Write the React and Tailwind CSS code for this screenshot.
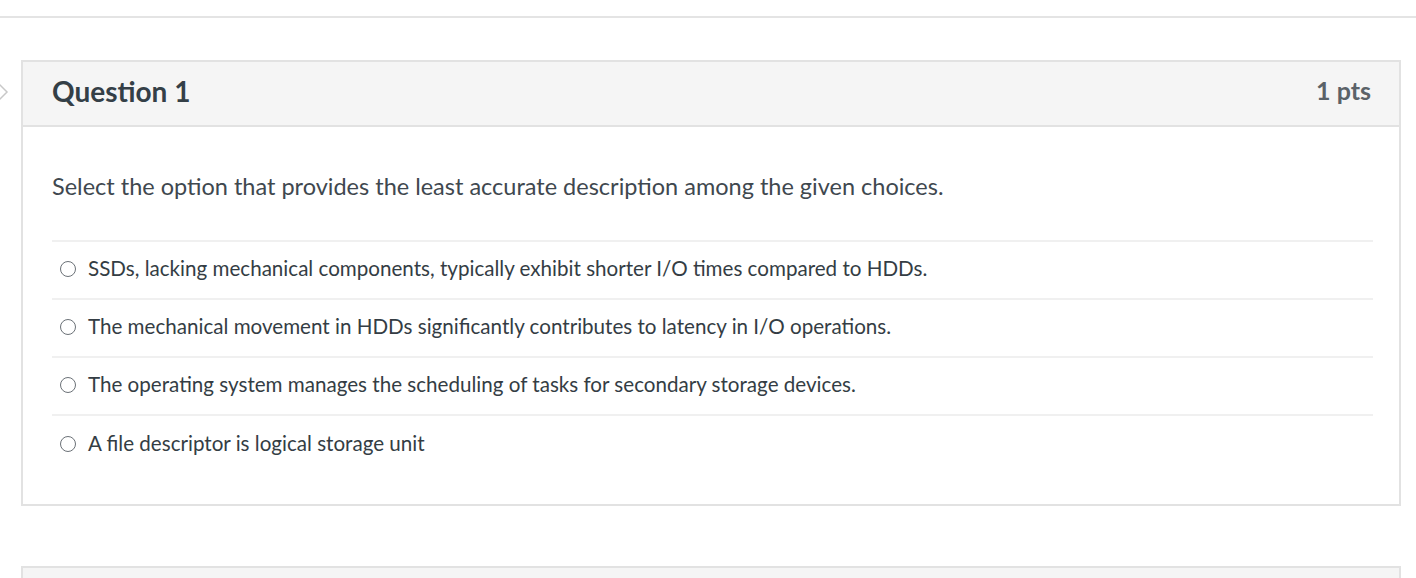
import React from 'react';

const options = [
  'SSDs, lacking mechanical components, typically exhibit shorter I/O times compared to HDDs.',
  'The mechanical movement in HDDs significantly contributes to latency in I/O operations.',
  'The operating system manages the scheduling of tasks for secondary storage devices.',
  'A file descriptor is logical storage unit',
];

const App = () => {
  return (
    <div className="relative min-h-[578px] bg-white overflow-hidden" style={{ fontFamily: 'Lato, "Open Sans", sans-serif' }}>
      <div className="h-[18px] border-b-2 border-[#e4e4e4]" />

      {/* peeking nav chevron */}
      <svg className="absolute left-0 top-[82px]" width="10" height="20" viewBox="0 0 10 20">
        <path d="M-2 1 L7 10 L-2 19" fill="none" stroke="#c8c8c8" strokeWidth="1.5" />
      </svg>

      <div className="ml-[21px] mr-[15px] mt-[42px] border-2 border-[#e2e2e2]">
        <div className="flex items-center justify-between h-[65px] bg-[#f5f5f5] border-b-2 border-[#e2e2e2] pl-[29px] pr-[28px] pb-[5px]">
          <h2 className="text-[28px] font-bold text-[#343f47]">Question 1</h2>
          <span className="text-[25px] font-bold text-[#5b6268]">1 pts</span>
        </div>

        <div className="pl-[29px] pr-[26px] pt-[43px] pb-[30px]">
          <p className="text-[23.5px] text-[#40484f] leading-[32px]">
            Select the option that provides the least accurate description among the given choices.
          </p>

          <div className="mt-[38px] border-t-2 border-[#f0f0f0]">
            {options.map((opt, i) => (
              <div
                key={i}
                className={`flex items-center h-[58px] pl-[8px] pb-[3px] gap-[12px] ${i < options.length - 1 ? 'border-b-2 border-[#f0f0f0]' : ''}`}
              >
                <span className="w-[16px] h-[16px] rounded-full border-[1.5px] border-[#6b7177] bg-white shrink-0" />
                <span className="text-[20.6px] text-[#343d44]">{opt}</span>
              </div>
            ))}
          </div>
        </div>
      </div>

      <div className="ml-[21px] mr-[15px] mt-[60px] h-[30px] border-2 border-[#e2e2e2] bg-[#f5f5f5]" />
    </div>
  );
};

export default App;
